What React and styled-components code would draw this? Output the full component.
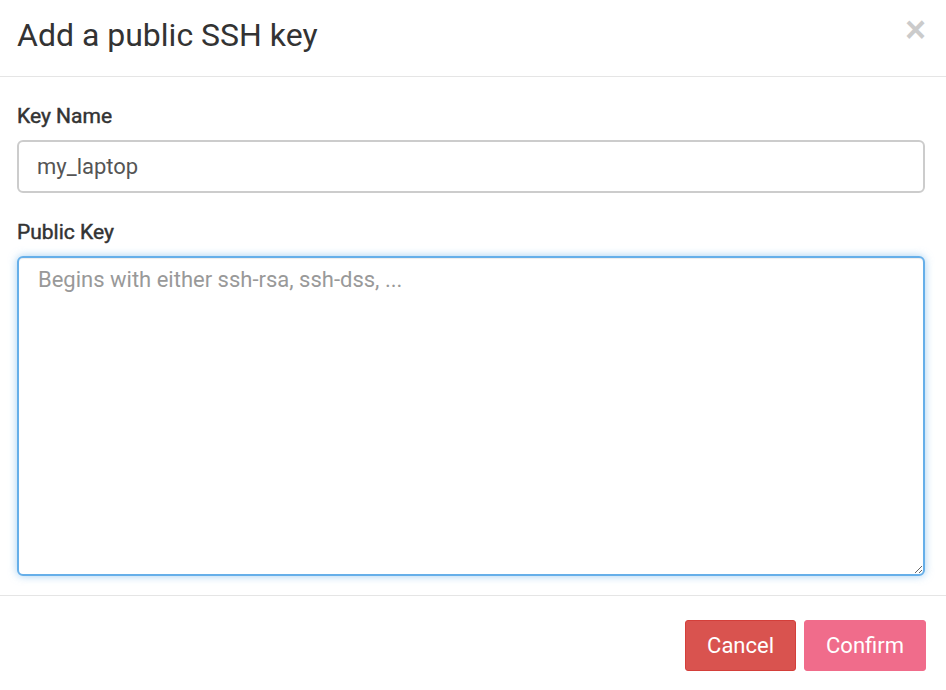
import React from "react";
import styled, { createGlobalStyle } from "styled-components";

const GlobalStyle = createGlobalStyle`
  html, body {
    margin: 0;
    padding: 0;
    background: #fff;
  }
  body {
    font-family: Roboto, "Helvetica Neue", Arial, sans-serif;
    color: #333;
  }
  * {
    box-sizing: border-box;
  }
`;

const Modal = styled.div`
  width: 946px;
  background: #fff;
`;

const Header = styled.div`
  height: 77px;
  padding: 0 20px 6px 17px;
  display: flex;
  align-items: center;
  justify-content: space-between;
  border-bottom: 1px solid #e5e5e5;
`;

const Title = styled.h4`
  margin: 0;
  font-size: 32px;
  font-weight: 400;
  color: #333;
`;

const Close = styled.button`
  border: 0;
  background: transparent;
  padding: 0;
  margin-top: -10px;
  font-family: "Liberation Sans", Arial, sans-serif;
  font-size: 36px;
  font-weight: 700;
  line-height: 1;
  color: #000;
  opacity: 0.2;
  cursor: pointer;
`;

const Body = styled.div`
  padding: 24px 21px 19px 17px;
`;

const Group = styled.div`
  & + & {
    margin-top: 24px;
  }
`;

const Label = styled.label`
  display: block;
  font-size: 21px;
  font-weight: 400;
  -webkit-text-stroke: 0.45px #333;
  line-height: 31px;
  margin-bottom: 8px;
  color: #333;
`;

const Input = styled.input`
  display: block;
  width: 100%;
  height: 53px;
  padding: 0 18px;
  font-family: Roboto, "Helvetica Neue", Arial, sans-serif;
  font-size: 22px;
  color: #555;
  border: 2px solid #ccc;
  border-radius: 6px;
  background: #fff;
  outline: none;
`;

const TextArea = styled.textarea`
  display: block;
  width: 100%;
  height: 320px;
  margin-top: 1px;
  padding: 7px 19px;
  font-family: Roboto, "Helvetica Neue", Arial, sans-serif;
  font-size: 22px;
  line-height: 30px;
  color: #555;
  border: 2px solid #66afe9;
  border-radius: 6px;
  outline: none;
  box-shadow: inset 0 1px 1px rgba(0, 0, 0, 0.075),
    0 0 9px rgba(102, 175, 233, 0.6);

  &::placeholder {
    color: #999;
  }
`;

const Footer = styled.div`
  border-top: 1px solid #e5e5e5;
  padding: 24px 20px 19px;
  display: flex;
  justify-content: flex-end;
  gap: 8px;
`;

const Button = styled.button`
  height: 51px;
  padding: 0 21px;
  font-family: Roboto, "Helvetica Neue", Arial, sans-serif;
  font-size: 22px;
  color: #fff;
  border-radius: 3px;
  border: 1px solid ${(p) => p.$border};
  background: ${(p) => p.$bg};
  cursor: pointer;
`;

export default function App() {
  return (
    <>
      <GlobalStyle />
      <Modal>
        <Header>
          <Title>Add a public SSH key</Title>
          <Close aria-label="Close">×</Close>
        </Header>
        <Body>
          <Group>
            <Label htmlFor="key-name">Key Name</Label>
            <Input id="key-name" defaultValue="my_laptop" />
          </Group>
          <Group>
            <Label htmlFor="public-key">Public Key</Label>
            <TextArea
              id="public-key"
              placeholder="Begins with either ssh-rsa, ssh-dss, ..."
            />
          </Group>
        </Body>
        <Footer>
          <Button $bg="#d9534f" $border="#d43f3a">
            Cancel
          </Button>
          <Button $bg="#f06c8b" $border="#f06c8b">
            Confirm
          </Button>
        </Footer>
      </Modal>
    </>
  );
}
